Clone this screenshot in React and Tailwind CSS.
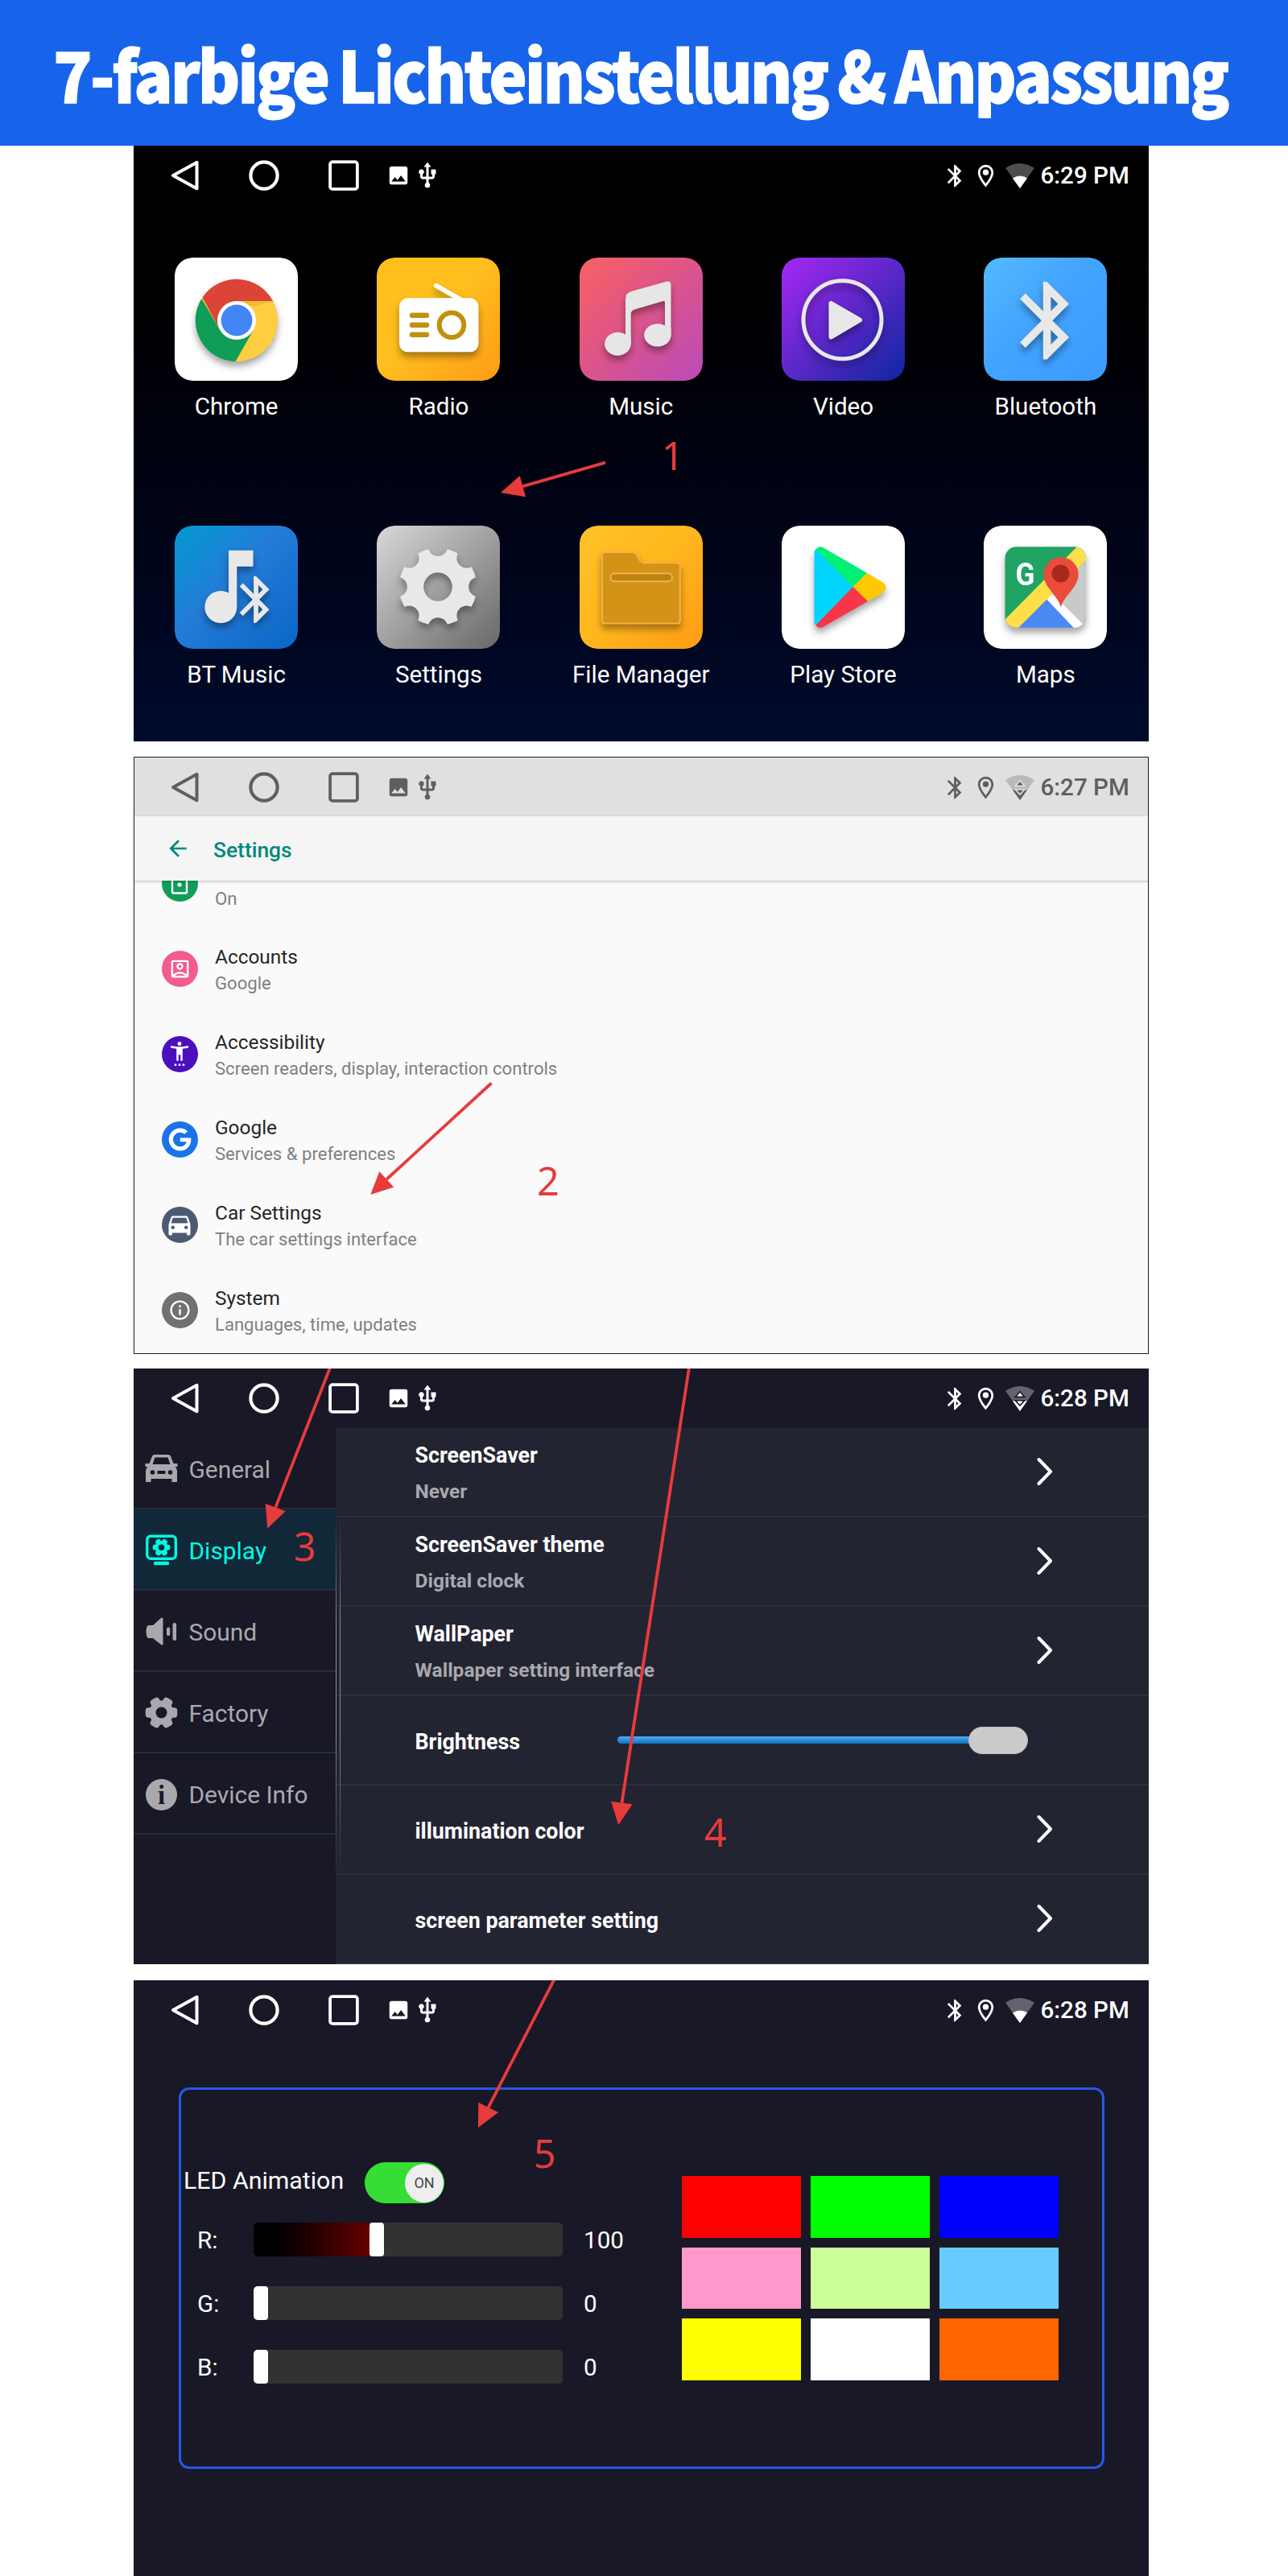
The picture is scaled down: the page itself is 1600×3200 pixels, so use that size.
import React from "react";
import {
  MdOutlineAccountBox,
  MdDirectionsCar,
  MdInfoOutline,
  MdSettingsAccessibility,
  MdArrowBack,
  MdImage,
  MdUsb,
} from "react-icons/md";
import { FaGoogle } from "react-icons/fa";

const RED = "#e83b3c";
const BT_PATH =
  "M17.71 7.71L12 2h-1v7.59L6.41 5 5 6.41 10.59 12 5 17.59 6.41 19 11 14.41V22h1l5.71-5.71-4.3-4.29 4.3-4.29zM13 5.83l1.88 1.88L13 9.59V5.83zm1.88 10.46L13 18.17v-3.76l1.88 1.88z";

/* ---------- status bar ---------- */

function Wifi({ dim, knock, active }) {
  return (
    <svg width="36" height="31" viewBox="0 0 35 30" className="ml-[8px] shrink-0">
      <path d="M0 5.5Q17.5 -5.5 35 5.5L17.5 30Z" fill={dim} />
      {active ? (
        <g fill="currentColor">
          <path d="M17.5 6.5l5.6 6.5h-11.2z" stroke={knock} strokeWidth="1.6" />
          <path d="M8.7 17.6l8.8 12.4 8.8-12.4z" />
          <path d="M12 17.2h11l-5.5 6z" stroke={knock} strokeWidth="1.6" />
        </g>
      ) : (
        <path d="M8.7 18Q17.5 12 26.3 18L17.5 30Z" fill="currentColor" />
      )}
    </svg>
  );
}

function StatusBar({ time, className, dim, knock, active }) {
  return (
    <div className={"flex h-[74px] shrink-0 items-center pl-[45.500px] pr-[22.500px] " + className}>
      <svg width="36" height="38" viewBox="0 0 36 38" fill="none" stroke="currentColor" strokeWidth="4" strokeLinejoin="round">
        <path d="M3 19L32.5 2.8V35.2Z" />
      </svg>
      <svg width="38" height="38" viewBox="0 0 38 38" className="ml-[61.500px]" fill="none" stroke="currentColor" strokeWidth="4.2">
        <circle cx="19" cy="19" r="16.6" />
      </svg>
      <svg width="38" height="38" viewBox="0 0 38 38" className="ml-[61px]" fill="none" stroke="currentColor" strokeWidth="3.8">
        <rect x="2.1" y="2.1" width="33.8" height="33.8" rx="3" />
      </svg>
      <MdImage className="ml-[33.500px] size-[30px]" />
      <MdUsb className="ml-[3.500px] size-[36px]" />
      <div className="grow" />
      <svg viewBox="0 0 24 24" className="size-[33px]" fill="currentColor">
        <path d={BT_PATH} />
      </svg>
      <svg viewBox="0 0 24 24" className="ml-[5px] size-[33px]" fill="currentColor">
        <path d="M12 2C8.13 2 5 5.13 5 9c0 5.25 7 13 7 13s7-7.75 7-13c0-3.87-3.13-7-7-7zM7 9c0-2.76 2.24-5 5-5s5 2.24 5 5c0 2.88-2.88 7.19-5 9.88C9.92 16.21 7 11.85 7 9z" />
        <circle cx="12" cy="8.8" r="2.7" />
      </svg>
      <Wifi dim={dim} knock={knock} active={active} />
      <span className="ml-[7.500px] w-[112px] whitespace-nowrap text-[29.6px] font-medium leading-[34px]">{time}</span>
    </div>
  );
}

/* ---------- annotations ---------- */

function Arrow({ from, tip, a, b }) {
  const mx = (a[0] + b[0]) / 2;
  const my = (a[1] + b[1]) / 2;
  return (
    <svg className="pointer-events-none absolute left-0 top-0" width="1261" height="740" viewBox="0 0 1261 740">
      <line x1={from[0]} y1={from[1]} x2={mx} y2={my} stroke={RED} strokeWidth="3.8" />
      <polygon points={[tip, a, b].map((p) => p.join(",")).join(" ")} fill={RED} />
    </svg>
  );
}

function Step({ n, className }) {
  return (
    <span className={"absolute font-['Noto_Sans'] text-[48.5px] leading-[48px] text-[#e83b3c] " + className}>{n}</span>
  );
}

/* ---------- launcher ---------- */

const SHADOW = "drop-shadow-[0_6px_4px_rgba(0,0,0,0.35)]";

function Tile({ id, c1, c2, c3, children }) {
  return (
    <svg width="153" height="153" viewBox="0 0 153 153" className="shrink-0 overflow-hidden rounded-[22px]">
      <defs>
        <linearGradient id={id} x1="0" y1="0" x2="1" y2="1">
          <stop offset="0.04" stopColor={c1} />
          <stop offset="0.45" stopColor={c2} />
          <stop offset="1" stopColor={c3} />
        </linearGradient>
      </defs>
      <rect width="153" height="153" rx="22" fill={"url(#" + id + ")"} />
      <g className={SHADOW}>{children}</g>
    </svg>
  );
}

const APPS = [
  {
    name: "Chrome",
    icon: (
      <Tile id="chrome" c1="#fff" c2="#fff" c3="#fff">
        <circle cx="77" cy="78" r="51" fill="#ffcd40" />
        <path d="M33.5 51L56.2 90 77 78 97.8 90 75.5 129A51 51 0 0 1 33.5 51Z" fill="#0f9d58" />
        <path d="M34.5 49.5A51 51 0 0 1 122 54H77V78L56.2 90Z" fill="#db4437" />
        <path d="M77 54h45.500l-26 7z" fill="#e6ab24" opacity="0.5" />
        <circle cx="77" cy="78" r="24" fill="#fff" />
        <circle cx="77" cy="78" r="19.400" fill="#4285f4" />
      </Tile>
    ),
  },
  {
    name: "Radio",
    icon: (
      <Tile id="radio" c1="#ffc01c" c2="#ffbf1e" c3="#fe9c16">
        <path d="M74 35L104 52" stroke="#fff" strokeWidth="6" strokeLinecap="round" />
        <rect x="28" y="50.300" width="98.500" height="67" rx="10.500" fill="#fff" />
        <path d="M44 71.700h18M44 83.700h18M44 95.700h18" stroke="#c1900f" strokeWidth="6.400" strokeLinecap="round" />
        <circle cx="93" cy="83.700" r="15.300" fill="none" stroke="#c1900f" strokeWidth="6" />
      </Tile>
    ),
  },
  {
    name: "Music",
    icon: (
      <Tile id="music" c1="#f66064" c2="#df5587" c3="#b94bb9">
        <g fill="#e6e6e6">
          <path d="M57 52Q57 44 64 42L107 30Q113.500 28 113.500 35V98h-7.500V56Q106 53.500 104 54L68 64.500Q63.700 66 63.700 70V108h-6.700Z" />
          <path d="M63.700 100V107A16.300 14.500 0 1 1 57 95.500Z" />
          <path d="M113.500 88V97A16.700 14.200 0 1 1 106 84.500Z" />
        </g>
      </Tile>
    ),
  },
  {
    name: "Video",
    icon: (
      <Tile id="video" c1="#a028f0" c2="#6427cd" c3="#0d269f">
        <circle cx="75.500" cy="77.300" r="48.500" fill="none" stroke="#e8e8e8" strokeWidth="5" />
        <path d="M61.500 57V98.500L97 77.500Z" fill="#e8e8e8" stroke="#e8e8e8" strokeWidth="6" strokeLinejoin="round" />
      </Tile>
    ),
  },
  {
    name: "Bluetooth",
    icon: (
      <Tile id="bt" c1="#52b7ff" c2="#43a4ff" c3="#3a9bff">
        <path d={BT_PATH} transform="translate(21 20.300) scale(4.800 4.830)" fill="#e8e8e8" />
      </Tile>
    ),
  },
  {
    name: "BT Music",
    icon: (
      <Tile id="btmusic" c1="#0697d1" c2="#247bd8" c3="#0b66c4">
        <g fill="#e8e8e8">
          <circle cx="57.300" cy="101" r="20" />
          <path d="M67 30.700H97.500V50.700H77.300V101H67Z" />
          <path d={BT_PATH} transform="translate(66.200 56.900) scale(2.900)" />
        </g>
      </Tile>
    ),
  },
  {
    name: "Settings",
    icon: (
      <Tile id="settings" c1="#d4d4d4" c2="#a6a6a6" c3="#676767">
        <mask id="gear-cut">
          <rect width="153" height="153" fill="#fff" />
          {[0, 1, 2, 3, 4, 5, 6, 7].map((i) => (
            <circle key={i} cx="76" cy="25.500" r="12.300" fill="#000" transform={`rotate(${i * 45} 76 76)`} />
          ))}
          <circle cx="76" cy="76" r="17.800" fill="#000" />
        </mask>
        <circle cx="76" cy="76" r="48.300" fill="#e8e8e8" mask="url(#gear-cut)" />
      </Tile>
    ),
  },
  {
    name: "File Manager",
    icon: (
      <Tile id="files" c1="#ffc127" c2="#ffb81e" c3="#fe9c16">
        <path
          d="M31 33H65.500Q69 33 71 36L75 43.500Q77 46.200 80 46.200H121Q124.800 46.200 124.800 50V118Q124.800 121.500 121 121.500H31.500Q28 121.500 28 118V36.500Q28 33 31.500 33Z"
          fill="#d39317"
          stroke="#f7b247"
          strokeWidth="2"
        />
        <rect x="38.500" y="59.300" width="76.500" height="10" rx="5" fill="#bd8414" stroke="#f7b247" strokeWidth="2" />
      </Tile>
    ),
  },
  {
    name: "Play Store",
    icon: (
      <Tile id="play" c1="#fff" c2="#fff" c3="#fff">
        <path d="M40.500 32L42.500 29 89 76 42.500 124 40.500 121Z" fill="#00d4ff" />
        <path d="M42.500 29.500Q46 24 52 27.500L106 58.700 88.600 76Z" fill="#00f076" />
        <path d="M106 58.700L125 70Q134 76.700 125 84L107 94 88.600 76Z" fill="#ffc900" />
        <path d="M42.500 123.500Q46 129 52 125.500L107 94 88.600 76Z" fill="#f83549" />
      </Tile>
    ),
  },
  {
    name: "Maps",
    icon: (
      <Tile id="maps" c1="#fff" c2="#fff" c3="#fff">
        <clipPath id="map-clip">
          <rect x="26.500" y="26.300" width="100.500" height="100.400" rx="14" />
        </clipPath>
        <g clipPath="url(#map-clip)">
          <rect x="26" y="26" width="102" height="102" fill="#1fa463" />
          <path d="M43 127L127 43V127Z" fill="#c9c9c9" />
          <path d="M43 127L77.600 90.700 112 127Z" fill="#4a89f3" />
          <path d="M77.600 90.700L83.700 83 127 126V128H113Z" fill="#fff" />
          <path d="M26 117L116 26H128V42L43 127H26Z" fill="#ffdf49" />
        </g>
        <text x="39.500" y="73.500" fontSize="38" fontWeight="700" fontFamily="Roboto, sans-serif" fill="#fff" textLength="24" lengthAdjust="spacingAndGlyphs">
          G
        </text>
        <path d="M96 101.700C93 87 74.400 77 74.400 60.500A21.600 21.300 0 0 1 117.600 60.500C117.600 77 99 87 96 101.700Z" fill="#ea4b3b" />
        <circle cx="95.500" cy="59.500" r="11" fill="#a8291c" />
      </Tile>
    ),
  },
];

function Launcher() {
  return (
    <section className="relative h-[740px] bg-linear-to-b from-black via-[#00020f] to-[#000b2c] text-white">
      <StatusBar time="6:29 PM" className="text-white" dim="#4d4d4d" />
      <div className="mt-[65px] grid grid-cols-[repeat(5,251.3px)] gap-y-[137px] pl-[2px]">
        {APPS.map((app) => (
          <div key={app.name} className="flex h-[196px] flex-col items-center">
            {app.icon}
            <span className="mt-[14px] whitespace-nowrap text-[29.6px] leading-[36px]">{app.name}</span>
          </div>
        ))}
      </div>
      <Arrow from={[586, 393.700]} tip={[456, 431]} a={[479.700, 410]} b={[487, 436.300]} />
      <Step n="1" className="left-[656px] top-[360px]" />
    </section>
  );
}

/* ---------- android settings ---------- */

const ROWS = [
  { title: "Accounts", sub: "Google", bg: "bg-[#f25c8e]", icon: <MdOutlineAccountBox className="size-[29px]" /> },
  {
    title: "Accessibility",
    sub: "Screen readers, display, interaction controls",
    bg: "bg-[#4b0fbe]",
    icon: <MdSettingsAccessibility className="size-[30px]" />,
  },
  { title: "Google", sub: "Services & preferences", bg: "bg-[#1a73e8]", icon: <FaGoogle className="size-[29px]" /> },
  { title: "Car Settings", sub: "The car settings interface", bg: "bg-[#4c5b73]", icon: <MdDirectionsCar className="size-[36px]" /> },
  { title: "System", sub: "Languages, time, updates", bg: "bg-[#717171]", icon: <MdInfoOutline className="size-[29px]" /> },
];

function AndroidSettings() {
  return (
    <section className="relative mt-[19px] flex h-[742px] flex-col overflow-hidden bg-[#fafafa]">
      <StatusBar time="6:27 PM" className="bg-[#e0e0e0] pt-[2px] text-[#5f5f5f]" dim="#b9b9b9" knock="#e0e0e0" active />
      <div className="relative z-10 flex h-[80px] shrink-0 items-center bg-[#f5f5f5] pl-[39px] text-[#00897b] shadow-[0_1px_3px_rgba(0,0,0,0.25)]">
        <MdArrowBack className="size-[32px]" />
        <span className="ml-[28px] mt-[4px] text-[26.4px] font-medium leading-8">Settings</span>
      </div>
      <div className="-mt-[50px] pl-[34.500px]">
        <div className="flex h-[106px] items-center">
          <span className="flex size-[45px] items-center justify-center rounded-full bg-[#0f9d58] text-white">
            <svg width="22" height="30" viewBox="0 0 22 30" fill="none" stroke="currentColor" strokeWidth="2.4">
              <rect x="2" y="1.500" width="18" height="26" rx="1.500" />
              <circle cx="11" cy="17" r="2.600" fill="currentColor" stroke="none" />
            </svg>
          </span>
          <div className="ml-[21.500px] mt-[37px] text-[22.200px] leading-[32px] text-[#808080]">On</div>
        </div>
        {ROWS.map((r) => (
          <div key={r.title} className="flex h-[106px] items-center">
            <span className={"flex size-[45px] items-center justify-center rounded-full text-white " + r.bg}>{r.icon}</span>
            <div className="ml-[21.500px] mt-[5px] whitespace-nowrap">
              <div className="text-[24.400px] leading-[32px] text-[#262626]">{r.title}</div>
              <div className="text-[22.100px] leading-[33px] text-[#808080]">{r.sub}</div>
            </div>
          </div>
        ))}
      </div>
      <div className="pointer-events-none absolute inset-0 z-20 border border-[#1a1a1a]" />
      <Arrow from={[444.500, 405.500]} tip={[294.300, 544]} a={[305.300, 515.300]} b={[323.200, 534.700]} />
      <Step n="2" className="left-[501px] top-[502px]" />
    </section>
  );
}

/* ---------- car settings ---------- */

function Gear({ cx, cy, r, hole, fill, back }) {
  return (
    <g>
      {[0, 1, 2].map((i) => (
        <rect
          key={i}
          x={cx - r * 0.31}
          y={cy - r}
          width={r * 0.62}
          height={r * 2}
          rx={r * 0.2}
          fill={fill}
          transform={`rotate(${i * 60 + 30} ${cx} ${cy})`}
        />
      ))}
      <circle cx={cx} cy={cy} r={r * 0.76} fill={fill} />
      <circle cx={cx} cy={cy} r={hole} fill={back} />
    </g>
  );
}

const NAV = [
  {
    name: "General",
    icon: (
      <g>
        <path d="M5.500 13L9 4Q9.800 2 12 2H29Q31.200 2 32 4L35.500 13H40.500V17H37.500Q40 19 40 22V36H33.500V32H7.500V36H1V22Q1 19 3.500 17H.5V13ZM9.500 14H31.500L28.500 5.500H12.500Z" fill="#a9a9ad" fillRule="evenodd" />
        <circle cx="9.500" cy="24" r="2.800" fill="#181827" />
        <circle cx="31.500" cy="24" r="2.800" fill="#181827" />
        <path d="M15.500 24h10" stroke="#181827" strokeWidth="4" />
      </g>
    ),
  },
  {
    name: "Display",
    active: true,
    icon: (
      <g>
        <rect x="2.700" y="2.200" width="35.600" height="28" rx="4.500" fill="none" stroke="#00fbe2" strokeWidth="3.400" />
        <Gear cx={20.500} cy={16.200} r={10.800} hole={3.800} fill="#00fbe2" back="#112838" />
        <path d="M13 36h15" stroke="#00fbe2" strokeWidth="4.400" strokeLinecap="round" />
      </g>
    ),
  },
  {
    name: "Sound",
    icon: (
      <g fill="#a9a9ad">
        <path d="M4 12H10L20 3Q22.500 1.500 22.500 4V35Q22.500 37.500 20 36L10 28H4Q1.500 26 1.500 20T4 12Z" />
        <rect x="27" y="14.500" width="4.200" height="10.500" rx="2" />
        <rect x="34.500" y="9" width="4.600" height="22" rx="2.200" />
      </g>
    ),
  },
  { name: "Factory", icon: <Gear cx={20.500} cy={19.500} r={19.800} hole={7} fill="#a9a9ad" back="#181827" /> },
  {
    name: "Device Info",
    icon: (
      <g>
        <circle cx="20.500" cy="19.500" r="19.500" fill="#a9a9ad" />
        <text x="20.500" y="30.500" textAnchor="middle" fontFamily="Liberation Serif, serif" fontWeight="700" fontSize="33" fill="#181827">
          i
        </text>
      </g>
    ),
  },
];

const OPTIONS = [
  { title: "ScreenSaver", sub: "Never" },
  { title: "ScreenSaver theme", sub: "Digital clock" },
  { title: "WallPaper", sub: "Wallpaper setting interface" },
  { title: "Brightness", slider: true },
  { title: "illumination color" },
  { title: "screen parameter setting" },
];

function CarSettings() {
  return (
    <section className="relative mt-[18px] flex h-[740px] flex-col overflow-hidden bg-[#181827] text-white">
      <StatusBar time="6:28 PM" className="text-white" dim="#636370" knock="#181827" active />
      <div className="flex min-h-0 grow">
        <nav className="w-[251px] shrink-0">
          {NAV.map((n, i) => (
            <div
              key={n.name}
              className={
                "flex items-center border-b-2 border-[#2a2b38] pl-[14px] " +
                (i === 0 ? "h-[100.500px] " : "h-[101.200px] ") +
                (n.active ? "bg-[#112838] text-[#00fbe2]" : "text-[#a9a9ad]")
              }
            >
              <svg width="42" height="39" viewBox="0 0 42 39" className="mt-[3px]">
                {n.icon}
              </svg>
              <span className="ml-[12.500px] mt-[5px] whitespace-nowrap text-[29.900px] leading-9">{n.name}</span>
            </div>
          ))}
        </nav>
        <div className="relative grow bg-[#232432]">
          <div className="absolute left-0 top-[108px] h-[450px] w-[6px] border-x border-[#8b8b90] [mask-image:linear-gradient(to_bottom,transparent,black_30%,black_60%,transparent)]" />
          {OPTIONS.map((o) => (
            <div key={o.title} className="flex h-[111px] items-center border-b-2 border-[#2d2e3b] pl-[98.500px] pr-[119px] font-bold">
              <div className={"whitespace-nowrap " + (o.sub ? "mt-[7px]" : "mt-[4px]")}>
                <div className="text-[26.800px] leading-[42px]">{o.title}</div>
                {o.sub && <div className="text-[24.500px] leading-[48px] text-[#a8a8ad]">{o.sub}</div>}
              </div>
              <div className="grow" />
              {o.slider ? (
                <div className="mr-[31px] flex items-center">
                  <div className="h-[9px] w-[438px] rounded-l-full bg-linear-to-b from-[#48b0f3] to-[#0f6fc0]" />
                  <div className="-ml-[2px] h-[34px] w-[74px] rounded-full border border-[#bdbdbd] bg-[#cbcbcb]" />
                </div>
              ) : (
                <svg width="20" height="36" viewBox="0 0 20 36" fill="none" stroke="#fff" strokeWidth="4" strokeLinecap="round" strokeLinejoin="round" className="-mt-px">
                  <path d="M2.500 3L17 18 2.500 33" />
                </svg>
              )}
            </div>
          ))}
        </div>
      </div>
      <Arrow from={[244, -1]} tip={[166.200, 198.700]} a={[163.800, 168]} b={[188.700, 177.300]} />
      <Arrow from={[690, -1]} tip={[602.200, 567]} a={[593.200, 538]} b={[619.700, 541.300]} />
      <Step n="3" className="left-[199px] top-[196px]" />
      <Step n="4" className="left-[709px] top-[551px]" />
    </section>
  );
}

/* ---------- illumination color ---------- */

const SWATCHES = [
  "bg-[#ff0000]",
  "bg-[#00ff00]",
  "bg-[#0000ff]",
  "bg-[#ff99cc]",
  "bg-[#ccff99]",
  "bg-[#66ccff]",
  "bg-[#ffff00]",
  "bg-[#ffffff]",
  "bg-[#ff6600]",
];

const CHANNELS = [
  { label: "R:", value: 100 },
  { label: "G:", value: 0 },
  { label: "B:", value: 0 },
];

function Illumination() {
  return (
    <section className="relative mt-5 flex h-[740px] flex-col overflow-hidden bg-[#181827] text-white">
      <StatusBar time="6:28 PM" className="text-white" dim="#636370" />
      <div className="ml-[56px] mt-[59px] flex h-[474px] w-[1150px] rounded-[13px] border-[3px] border-[#2659e6] text-[29.600px]">
        <div className="w-[622px] pt-[90px]">
          <div className="flex h-[51px] pl-[3px]">
            <span className="w-[225px] whitespace-nowrap text-[30.300px] leading-[46px]">LED Animation</span>
            <div className="flex h-[51px] w-[99px] items-center justify-end rounded-full bg-[#35dd35] pr-[1px]">
              <span className="flex size-[48px] items-center justify-center rounded-full bg-[#eee] text-[18px] text-[#444]">ON</span>
            </div>
          </div>
          <div className="mt-[24px] flex flex-col gap-[37px]">
            {CHANNELS.map((c) => (
              <div key={c.label} className="flex h-[42px] items-center">
                <span className="mt-[2px] w-[90px] pl-[20px]">{c.label}</span>
                <div className="flex h-[42px] w-[384px] overflow-hidden rounded-[5px] bg-[#323232]">
                  <div className="bg-linear-to-r from-black to-[#660000]" style={{ width: c.value * 1.44 }} />
                  <div className="w-[17.500px] rounded-[4px] bg-white" />
                </div>
                <span className="ml-[26px] mt-[2px]">{c.value}</span>
              </div>
            ))}
          </div>
        </div>
        <div className="mt-[107px] grid h-[254px] w-[468px] grid-cols-3 grid-rows-3 gap-x-[12px] gap-y-[12px]">
          {SWATCHES.map((s) => (
            <div key={s} className={s} />
          ))}
        </div>
      </div>
      <Arrow from={[522.500, -1]} tip={[427.900, 183.300]} a={[428.300, 151.700]} b={[453, 164]} />
      <Step n="5" className="left-[497px] top-[190px]" />
    </section>
  );
}

export default function App() {
  return (
    <div className="h-[3200px] w-[1600px] overflow-hidden bg-white font-['Roboto']">
      <header className="flex h-[181px] items-center justify-center bg-[#1764ea] pr-[9px]">
        <h1 className="origin-center scale-x-[0.912] whitespace-nowrap font-['Noto_Sans_CJK_SC'] text-[87px] font-black leading-none tracking-[-3px] text-white [-webkit-text-stroke:1.5px_white] [word-spacing:-3px]">
          7-farbige Lichteinstellung &amp; Anpassung
        </h1>
      </header>
      <main className="ml-[166px] w-[1261px]">
        <Launcher />
        <AndroidSettings />
        <CarSettings />
        <Illumination />
      </main>
    </div>
  );
}
